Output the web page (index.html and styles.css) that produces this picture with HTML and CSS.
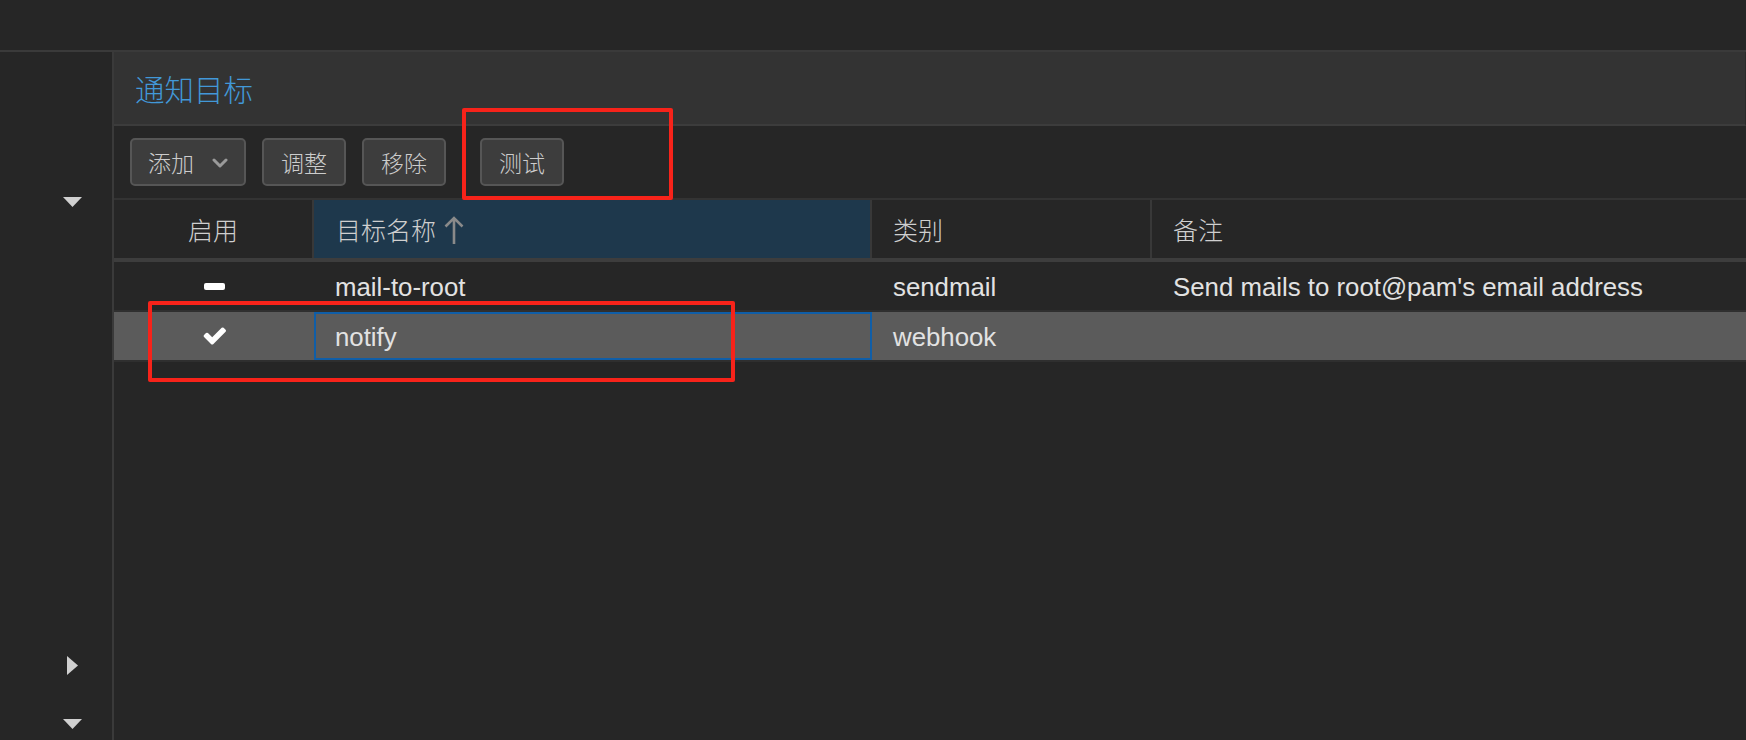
FILE: index.html
```html
<!DOCTYPE html>
<html lang="zh">
<head>
<meta charset="utf-8">
<title>通知目标</title>
<link rel="stylesheet" href="styles.css">
</head>
<body>
<div class="page">
  <div class="topbar"></div>
  <div class="main">
    <aside class="sidebar">
      <svg class="tri-down" width="19" height="10" viewBox="0 0 19 10"><polygon points="0,0 19,0 9.5,10" fill="#d0d0d0"/></svg>
      <svg class="tri-right" width="11" height="19" viewBox="0 0 11 19"><polygon points="0,0 11,9.5 0,19" fill="#d0d0d0"/></svg>
      <svg class="tri-down tri-last" width="19" height="10" viewBox="0 0 19 10"><polygon points="0,0 19,0 9.5,10" fill="#d0d0d0"/></svg>
    </aside>
    <section class="content">
      <div class="panel-title">通知目标</div>
      <div class="toolbar">
        <button class="btn btn-menu">添加<svg class="chev" width="16" height="10" viewBox="0 0 16 10"><polyline points="2,2 8,8 14,2" fill="none" stroke="#9a9a9a" stroke-width="3" stroke-linecap="round" stroke-linejoin="round"/></svg></button>
        <button class="btn">调整</button>
        <button class="btn">移除</button>
        <button class="btn btn-test">测试</button>
      </div>
      <div class="grid">
        <div class="grid-head">
          <div class="hcell hcell-center">启用</div>
          <div class="hcell hcell-sorted">目标名称<svg class="sort" width="20" height="28" viewBox="0 0 20 28"><path d="M10 2 V28 M1.5 10.5 L10 2 L18.5 10.5" fill="none" stroke="#8a8a8a" stroke-width="2.6"/></svg></div>
          <div class="hcell">类别</div>
          <div class="hcell hcell-last">备注</div>
        </div>
        <div class="grid-row">
          <div class="cell cell-center"><span class="minus"></span></div>
          <div class="cell">mail-to-root</div>
          <div class="cell">sendmail</div>
          <div class="cell">Send mails to root@pam's email address</div>
        </div>
        <div class="grid-row selected">
          <div class="cell cell-center"><svg class="check" width="23" height="18" viewBox="77 330 1594 1192"><path fill="#ffffff" d="M1671 566q0 40-28 68l-724 724-136 136q-28 28-68 28t-68-28l-136-136-362-362q-28-28-28-68t28-68l136-136q28-28 68-28t68 28l294 295 656-657q28-28 68-28t68 28l136 136q28 28 28 68z"/></svg></div>
          <div class="cell cell-focus">notify</div>
          <div class="cell">webhook</div>
          <div class="cell"></div>
        </div>
      </div>
    </section>
  </div>
  <div class="mark mark-test"></div>
  <div class="mark mark-row"></div>
</div>
</body>
</html>
```

FILE: styles.css
```css
* { box-sizing: border-box; }
html, body { margin: 0; padding: 0; }
body {
  background: #262626;
  font-family: "Liberation Sans", "Noto Sans CJK SC", sans-serif;
  color: #e6e6e6;
  overflow: hidden;
}
.page {
  position: relative;
  width: 1746px;
  height: 740px;
  display: flex;
  flex-direction: column;
}
.topbar {
  height: 52px;
  border-bottom: 2px solid #3a3a3a;
  background: #262626;
}
.main {
  flex: 1;
  display: flex;
  min-height: 0;
}
.sidebar {
  width: 114px;
  border-right: 2px solid #3a3a3a;
  display: flex;
  flex-direction: column;
  align-items: flex-start;
  padding: 145px 0 11px 63px;
}
.sidebar svg { display: block; }
.tri-right { margin-top: auto; margin-left: 4px; }
.tri-last { margin-top: 44px; }
.content {
  flex: 1;
  display: flex;
  flex-direction: column;
  min-width: 0;
}
.panel-title {
  height: 74px;
  background: #333333;
  border-bottom: 2px solid #3c3c3c;
  border-right: 1px solid #2a2a2a;
  display: flex;
  align-items: center;
  padding-left: 21px;
  padding-bottom: 1px;
  font-size: 29.5px;
  font-weight: 300;
  color: #4298d8;
}
.toolbar {
  height: 74px;
  border-bottom: 2px solid #333333;
  display: flex;
  align-items: flex-start;
  gap: 16px;
  padding: 12px 16px 0;
}
.btn {
  height: 48px;
  display: inline-flex;
  align-items: center;
  gap: 18px;
  padding: 0 17px;
  background: #3d3d3d;
  border: 2px solid #565656;
  border-radius: 5px;
  color: #cccccc;
  font-family: "Noto Sans CJK SC", sans-serif;
  font-weight: 300;
  font-size: 23px;
  line-height: 1;
}
.btn-menu { padding: 0 16px 0 16px; }
.chev { display: block; margin-top: 1px; }
.btn-test { margin-left: 18px; }
.grid { display: flex; flex-direction: column; }
.grid-head, .grid-row {
  display: grid;
  grid-template-columns: 200px 558px 280px 1fr;
}
.grid-head {
  height: 62px;
  border-bottom: 4px solid #3d3d3d;
}
.hcell {
  display: flex;
  align-items: center;
  padding-left: 21px;
  border-right: 2px solid #383838;
  font-family: "Noto Sans CJK SC", sans-serif;
  font-weight: 300;
  font-size: 25px;
  color: #cfcfcf;
}
.hcell-center { justify-content: center; padding-left: 0; }
.hcell-sorted { background: #1e384c; gap: 8px; padding-left: 22px; }
.hcell-last { border-right: none; }
.sort { display: block; margin-top: 1px; }
.grid-row {
  height: 50px;
  border-bottom: 2px solid #2f2f2f;
}
.grid-row.selected { background: #5b5b5b; }
.cell {
  display: flex;
  align-items: center;
  padding-left: 21px;
  padding-top: 2px;
  font-size: 25.8px;
  color: #e2e2e2;
  white-space: nowrap;
}
.cell-center { justify-content: center; padding-left: 0; padding-top: 0; }
.cell-focus { box-shadow: inset 0 0 0 2px #0f5ea8; }
.minus {
  display: block;
  width: 21px;
  height: 7px;
  border-radius: 2px;
  background: #ffffff;
  margin-left: 1px;
}
.check { display: block; margin-left: 1px; }
.mark {
  position: absolute;
  border: 4px solid #f7231a;
  border-radius: 2px;
  pointer-events: none;
}
.mark-test { left: 462px; top: 108px; width: 211px; height: 92px; }
.mark-row { left: 148px; top: 301px; width: 587px; height: 81px; }
```
